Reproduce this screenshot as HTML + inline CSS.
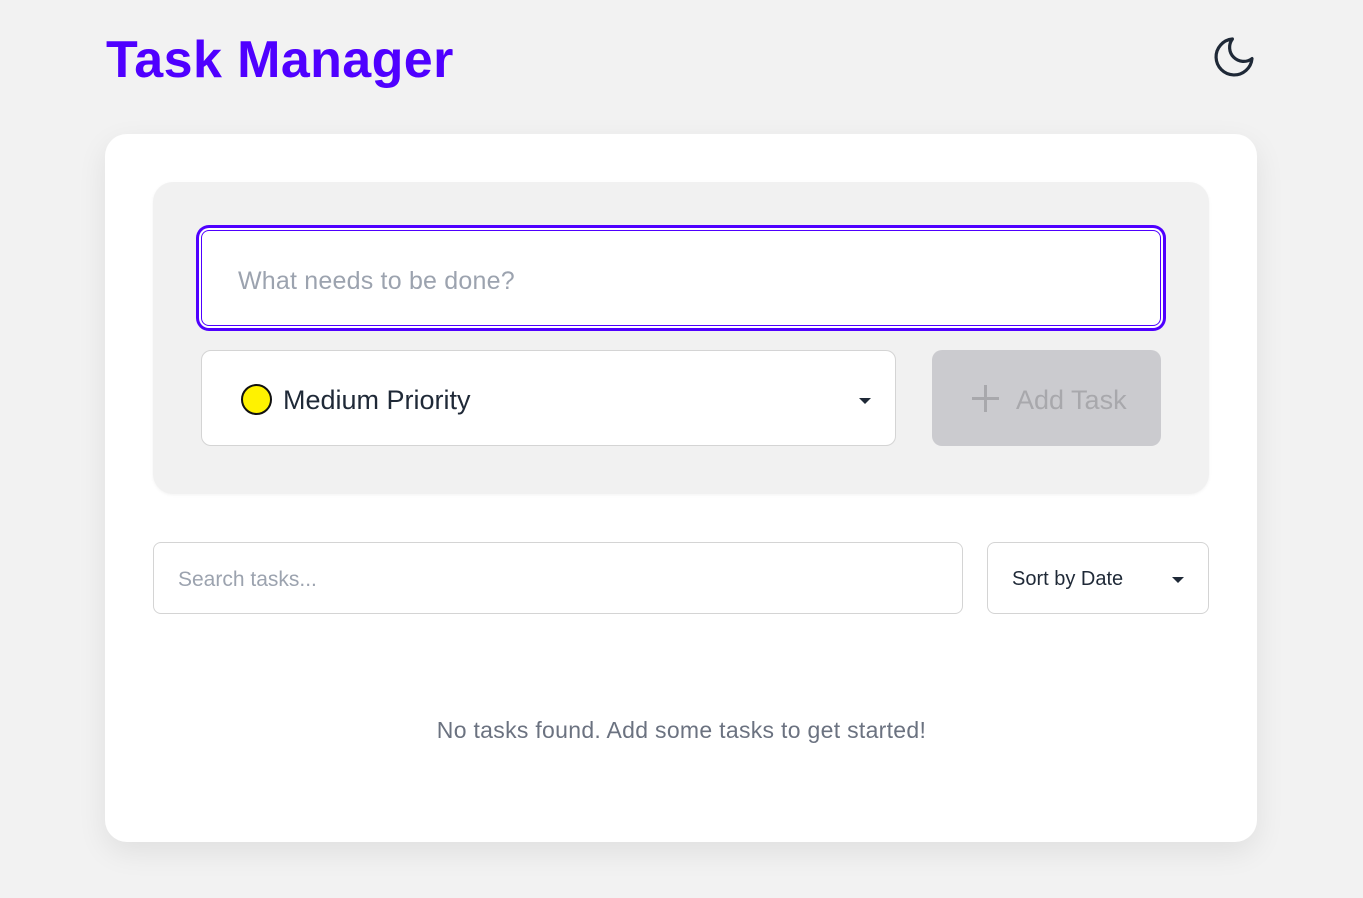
<!DOCTYPE html>
<html><head><style>
*{box-sizing:border-box;margin:0;padding:0}
body{width:1363px;height:898px;background:#f2f2f2;font-family:"Liberation Sans",sans-serif;position:relative;overflow:hidden}
.abs{position:absolute}
h1{position:absolute;left:106px;top:30px;font-size:52px;font-weight:bold;color:#4f00ff;letter-spacing:0.4px}
.card{left:105px;top:134px;width:1152px;height:708px;background:#fff;border-radius:22px;box-shadow:0 10px 30px rgba(0,0,0,0.08)}
.panel{left:153px;top:182px;width:1056px;height:312px;background:#f1f1f1;border-radius:20px;box-shadow:0 1px 3px rgba(0,0,0,0.05)}
.inp{left:201px;top:230px;width:960px;height:96px;background:#fff;border:1px solid #4f00ff;border-radius:8px;box-shadow:0 0 0 2px #fff,0 0 0 5px #4f00ff;font-size:25px;color:#9ca3af;padding:36px 0 0 36px;letter-spacing:0.2px}
.sel{left:201px;top:350px;width:695px;height:96px;background:#fff;border:1px solid #d4d4d4;border-radius:10px;font-size:27px;color:#1f2937}
.btn{left:932px;top:350px;width:229px;height:96px;background:#cbcbcf;border-radius:10px;color:#a8a8ac;font-size:27px}
.caret{width:0;height:0;border-left:6px solid transparent;border-right:6px solid transparent;border-top:6px solid #1f2937}
.box{background:#fff;border:1px solid #d4d4d4;border-radius:8px;font-size:21px}
</style></head><body>
<h1>Task Manager</h1>
<svg class="abs" style="left:1210px;top:33px" width="48" height="48" viewBox="0 0 24 24" fill="none" stroke="#1f2937" stroke-width="1.6" stroke-linecap="round" stroke-linejoin="round"><path d="M21 12.8A9 9 0 1 1 11.2 3 7 7 0 0 0 21 12.8z"/></svg>
<div class="abs card"></div>
<div class="abs panel"></div>
<div class="abs inp">What needs to be done?</div>
<div class="abs sel">
 <div class="abs" style="left:39px;top:33px;width:31px;height:31px;border-radius:50%;background:#fff200;border:2px solid #111"></div>
 <div class="abs" style="left:81px;top:34px">Medium Priority</div>
 <div class="abs caret" style="left:657px;top:47px"></div>
</div>
<div class="abs btn">
 <div class="abs" style="left:40px;top:47px;width:27px;height:3px;background:#a8a8ac"></div>
 <div class="abs" style="left:52px;top:35px;width:3px;height:27px;background:#a8a8ac"></div>
 <div class="abs" style="left:84px;top:35px">Add Task</div>
</div>
<div class="abs box" style="left:153px;top:542px;width:810px;height:72px;color:#9ca3af;padding:25px 0 0 24px">Search tasks...</div>
<div class="abs box" style="left:987px;top:542px;width:222px;height:72px;color:#1f2937;padding:25px 0 0 24px;font-size:20px">Sort by Date<div class="abs caret" style="left:184px;top:34px"></div></div>
<div class="abs" style="left:0;width:1363px;top:717px;text-align:center;font-size:23px;letter-spacing:0.3px;color:#6b7280">No tasks found. Add some tasks to get started!</div>
</body></html>
